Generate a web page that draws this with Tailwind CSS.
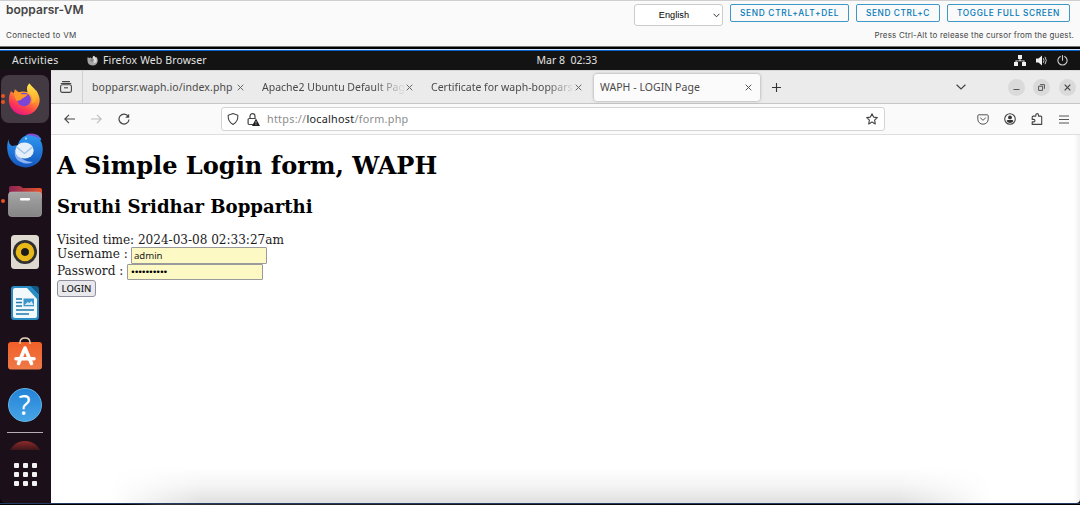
<!DOCTYPE html>
<html lang="en">
<head>
<meta charset="utf-8">
<title>bopparsr-VM</title>
<script src="https://cdn.jsdelivr.net/npm/@tailwindcss/browser@4"></script>
</head>
<body class="w-[1080px] h-[506px] overflow-hidden bg-white font-['Noto_Sans',sans-serif]">
<div class="relative flex flex-col w-[1080px] h-[505px] bg-black overflow-hidden">

  <!-- Console header -->
  <header class="flex justify-between h-[47px] shrink-0 bg-[#fafafa] border-t border-t-[#cfcfcf] border-b border-b-[#777] font-['Inter',sans-serif] text-[#454545]">
    <div class="flex flex-col pl-[6px]">
      <h1 class="text-[12px] leading-[17px] font-semibold tracking-[0.02px]">bopparsr-VM</h1>
      <p class="mt-[11px] text-[8px] leading-[13px] tracking-[0.3px]">Connected to VM</p>
    </div>
    <div class="flex flex-col items-end pr-[6px]">
      <div class="flex items-start pt-[3px] pr-[4px] font-medium text-[#0079b8]">
        <div class="flex items-center justify-end w-[89px] h-[22px] border border-[#ccc] rounded-[3px] bg-white text-black text-[9.2px] font-normal font-['Liberation_Sans',sans-serif] pr-[2px] mr-[7px]">
          <span class="mr-[24px] pt-px">English</span>
          <svg class="w-[7px] h-[5px]" viewBox="0 0 7 5" fill="none" stroke="#333" stroke-width="1"><path d="M.6.8 3.5 3.8 6.4.8"/></svg>
        </div>
        <button class="w-[119px] h-[18px] border border-[#3f97c8] rounded-[2px] text-[8.3px] leading-[17px] tracking-[0.72px] mr-[7px]">SEND CTRL+ALT+DEL</button>
        <button class="w-[84px] h-[18px] border border-[#3f97c8] rounded-[2px] text-[8.3px] leading-[17px] tracking-[0.6px] mr-[7px]">SEND CTRL+C</button>
        <button class="w-[123px] h-[18px] border border-[#3f97c8] rounded-[2px] text-[8.3px] leading-[17px] tracking-[0.63px]">TOGGLE FULL SCREEN</button>
      </div>
      <p class="mt-[3px] text-[8px] leading-[13px] tracking-[0.17px]">Press Ctrl-Alt to release the cursor from the guest.</p>
    </div>
  </header>
  <div class="h-[2px] shrink-0 bg-black"></div>
  <div class="h-[2px] shrink-0 bg-[#0b62cf] border-t border-[#cfe4f5]"></div>

  <!-- GNOME panel -->
  <div class="grid grid-cols-3 items-center h-[19px] shrink-0 bg-[#131313] text-[#e2e2e2] text-[10.5px] leading-[19px] px-[12px]">
    <div class="flex items-center">
      <span class="w-[75px] tracking-[0.28px]">Activities</span>
      <svg class="w-[11px] h-[11px] mr-[5px]" viewBox="0 0 16 16"><path d="M1 3l2 1.500 2.500-1 1 1.500L10 4 9.500 1 12 3l1 1 .5-1.500C15.500 5 16 7 15.500 9.500A7.500 7.500 0 0 1 .7 8.500C.5 6.500.5 5 1 3z" fill="#a5a5a5"/><path d="M8 3l2-2 4 4v5l-4 2z" fill="#dcdcdc"/><path d="M5 6l4-1 1 3-2 2-3-1z" fill="#858585"/></svg>
      <span class="tracking-[0.11px]">Firefox Web Browser</span>
    </div>
    <div class="text-center whitespace-pre pl-[54px]">Mar 8  02:33</div>
    <div class="flex items-center justify-end gap-[9px]">
      <svg class="w-[12px] h-[11px] -ml-px mr-px" viewBox="0 0 12 11" fill="#eee"><path d="M4 0h4v4H4zM0 7h4v4H0zM8 7h4v4H8zM5.500 4h1v1.500h4V7h-1V6.300h-7V7h-1V5.500h4z"/></svg>
      <svg class="w-[12px] h-[11px]" viewBox="0 0 12 11"><path d="M0 3.500h2.500L6 .5v10L2.500 7.500H0z" fill="#eee"/><path d="M7.300 3.200q1.500 2.300 0 4.600M9 1.800q2.600 3.700 0 7.400" fill="none" stroke="#ccc" stroke-width="1"/></svg>
      <svg class="w-[11px] h-[11px]" viewBox="0 0 11 11" fill="none" stroke="#ccc" stroke-width="1.100" stroke-linecap="round"><path d="M3.300 1.400a4.600 4.600 0 1 0 4.400 0M5.500.6v4.600"/></svg>
    </div>
  </div>

  <div class="flex h-[433px] shrink-0">
    <!-- Dock -->
    <nav class="relative flex flex-col items-center w-[51px] shrink-0 bg-[#1b1019] pt-[5px] pr-[2px] rounded-bl-[5px]">
      <div class="flex items-center justify-center w-[48px] h-[48px] shrink-0 rounded-[8px] bg-[#443a43]">
        <svg class="w-[33px] h-[34px]" viewBox="0 0 34 34">
          <defs>
            <linearGradient id="fx" x1=".8" y1="0" x2=".3" y2="1"><stop offset="0" stop-color="#ffe94a"/><stop offset=".4" stop-color="#ff9a2b"/><stop offset=".75" stop-color="#ff3b50"/><stop offset="1" stop-color="#e3168a"/></linearGradient>
            <linearGradient id="fy" x1="0" y1="0" x2="0" y2="1"><stop offset="0" stop-color="#ffe64a"/><stop offset="1" stop-color="#ffa02a"/></linearGradient>
          </defs>
          <path d="M3 9l3 2 1-4 4 3c3-1 6-1 9 0C19 6 20 3 22 1c2 3 4 4 5 8l2-1c3 5 4 8 3.500 12C31 28 25 33.500 17 33.500 8 33.500 1.500 27 1 19 .8 15 1.500 12 3 9z" fill="url(#fx)"/>
          <path d="M22 1c-3 3-3 6-1 9 4 3 5 7 3 12 5-1 7-6 5-13-1-3-5-5-7-8z" fill="url(#fy)"/>
          <circle cx="16.500" cy="17.500" r="7" fill="#7b45d8"/>
          <path d="M6 10c4-1 6 0 8 2l6 0c-1 3-4 3-6 5-1 2-3 1-5 2-2-3-3-6-3-9z" fill="#ff9826"/>
        </svg>
      </div>
      <span class="absolute left-[1px] top-[24px] w-[4px] h-[4px] rounded-full bg-[#e95420]"></span>
      <span class="absolute left-[1px] top-[30px] w-[4px] h-[4px] rounded-full bg-[#e95420]"></span>
      <span class="absolute left-[1px] top-[129px] w-[4px] h-[4px] rounded-full bg-[#e95420]"></span>

      <svg class="mt-[10px] w-[38px] h-[35px] shrink-0" viewBox="0 0 38 35">
        <defs><linearGradient id="tb" x1="0" y1="0" x2="0" y2="1"><stop offset="0" stop-color="#2f9bf3"/><stop offset="1" stop-color="#1355bd"/></linearGradient></defs>
        <path d="M3 5c-1 3 0 6 3 8l6-1c1-6 7-11 14-11 6 0 8 3 9.500 5.500-1 0-1.500 1-.5 2 3 6 2 15-2 20C28 34 20 36 13 33 4 30-2 18 3 5z" fill="url(#tb)"/>
        <path d="M20 2c5-3 11-1 14.500 4-5-3-10-4-14.500-4z" fill="#8a4ad0"/>
        <path d="M9 17c-1 6 1 10 6 12 4 2 8 2 12 0-8 0-14-4-18-12z" fill="#8fb4f3"/>
        <ellipse cx="18.500" cy="17.500" rx="9.200" ry="8" fill="#e4effa"/>
        <path d="M10.500 14l8 6.500 8-6.500" fill="none" stroke="#9fc0e4" stroke-width="1.200"/>
        <circle cx="20" cy="5.500" r="1" fill="#cfe6ff"/>
      </svg>

      <svg class="mt-[17px] w-[34px] h-[32px] shrink-0" viewBox="0 0 34 32">
        <defs><linearGradient id="fo" x1="0" x2="1"><stop offset="0" stop-color="#8a2456"/><stop offset="1" stop-color="#e85428"/></linearGradient><linearGradient id="fg" x1="0" y1="0" x2="0" y2="1"><stop offset="0" stop-color="#a5a5a5"/><stop offset="1" stop-color="#858585"/></linearGradient></defs>
        <path d="M1 3q0-2 2-2h9l3 2h17q2 0 2 2v8H1z" fill="url(#fo)"/>
        <rect x=".5" y="7" width="33" height="24.500" rx="3" fill="url(#fg)" stroke="#b5b5b5" stroke-width=".6"/>
        <rect x="12" y="13" width="10" height="2.500" rx="1" fill="#fff"/>
      </svg>

      <svg class="mt-[18px] w-[28px] h-[34px] shrink-0" viewBox="0 0 28 34">
        <rect width="28" height="34" rx="3.500" fill="#dedad0"/>
        <circle cx="14" cy="17" r="12" fill="#303030"/><circle cx="14" cy="17" r="6.500" fill="none" stroke="#e9b91a" stroke-width="5.500"/><circle cx="14" cy="17" r="3.800" fill="#1c1c1c"/>
      </svg>

      <svg class="mt-[17px] w-[28px] h-[34px] shrink-0" viewBox="0 0 28 34">
        <path d="M3 0h17l8 8v23q0 3-3 3H3q-3 0-3-3V3q0-3 3-3z" fill="#2a8cc4"/>
        <path d="M4 2h12l10 11v17q0 2-2 2H4q-2 0-2-2V4q0-2 2-2z" fill="#f3f8fb"/>
        <path d="M20 0h5q3 0 3 3v5z" fill="#0e5b8a"/>
        <path d="M5 13h6M5 16.500h6M5 20h6M5 24h18M5 28h13" stroke="#1e7ab0" stroke-width="1.600"/>
        <rect x="12.500" y="12.500" width="10.500" height="7.800" fill="#3b96cb"/><path d="M13.500 19l3-3 2 1 2-2 2 4z" fill="#d7ebf6"/>
      </svg>

      <svg class="mt-[16px] w-[34px] h-[34px] shrink-0" viewBox="0 0 34 34">
        <defs><linearGradient id="sw" x1="0" y1="0" x2="0" y2="1"><stop offset="0" stop-color="#f25f28"/><stop offset="1" stop-color="#ee7a48"/></linearGradient></defs>
        <rect y="6" width="34" height="27.500" rx="3" fill="url(#sw)"/>
        <path d="M12 8V6.500q0-4.500 5-4.500t5 4.500V8" fill="none" stroke="#e4d3bb" stroke-width="1.400"/>
        <path d="M10.500 27.500L17 12l6.500 15.500" fill="none" stroke="#fff" stroke-width="3.600" stroke-linejoin="round" stroke-linecap="round"/><path d="M8 22.800h18" stroke="#fff" stroke-width="3.600" stroke-linecap="round"/>
      </svg>

      <div class="mt-[18px] flex items-center justify-center w-[34px] h-[34px] shrink-0 rounded-full bg-linear-to-b from-[#2383d7] to-[#46a5e6] border border-[#67b4e8] text-white text-[27px] leading-[32px]">?</div>
      <div class="mt-[10px] w-[36px] h-[1px] shrink-0 bg-[#b5afb4]"></div>
      <div class="mt-[8px] w-[30px] h-[9px] shrink-0 overflow-hidden"><div class="w-[34px] h-[34px] -ml-[2px] rounded-full bg-linear-to-b from-[#8f2a2a] to-[#3a1519] to-28%"></div></div>
      <div class="mt-[13px] ml-px grid grid-cols-3 gap-[4px] shrink-0">
        <i class="w-[5px] h-[5px] rounded-[1px] bg-[#f2f2f2]"></i><i class="w-[5px] h-[5px] rounded-[1px] bg-[#f2f2f2]"></i><i class="w-[5px] h-[5px] rounded-[1px] bg-[#f2f2f2]"></i>
        <i class="w-[5px] h-[5px] rounded-[1px] bg-[#f2f2f2]"></i><i class="w-[5px] h-[5px] rounded-[1px] bg-[#f2f2f2]"></i><i class="w-[5px] h-[5px] rounded-[1px] bg-[#f2f2f2]"></i>
        <i class="w-[5px] h-[5px] rounded-[1px] bg-[#f2f2f2]"></i><i class="w-[5px] h-[5px] rounded-[1px] bg-[#f2f2f2]"></i><i class="w-[5px] h-[5px] rounded-[1px] bg-[#f2f2f2]"></i>
      </div>
    </nav>

    <!-- Browser window -->
    <div class="flex flex-col flex-1 min-w-0 bg-white rounded-br-[4px]">
      <div class="flex items-center h-[34px] shrink-0 bg-[#ebebeb] border-t border-t-[#d8d8d8] border-b border-b-[#c6c6c6] text-[10.5px] text-[#4a4a4a]">
        <div class="flex items-center justify-center w-[32px] h-full border-r border-[#cfcfcf] pr-[2px]">
          <svg class="w-[12px] h-[12px]" viewBox="0 0 12 12" fill="none" stroke="#444" stroke-width="1.100"><path d="M2.500.6h7M1.200 2.500h9.600" stroke-linecap="round"/><rect x=".6" y="3.800" width="10.800" height="7.600" rx="1.600"/><path d="M4 6.800h4"/></svg>
        </div>
        <div class="flex items-center w-[169px] pl-[9px]"><span class="w-[145px] pt-px whitespace-nowrap tracking-[0.08px]">bopparsr.waph.io/index.php</span>
          <svg class="w-[7px] h-[7px]" viewBox="0 0 7 7" stroke="#666" stroke-width="1"><path d="M.7.700l5.600 5.600M6.300.700L.7 6.300"/></svg></div>
        <div class="flex items-center w-[170px] pl-[10px]"><span class="w-[144px] pt-px whitespace-nowrap mask-r-from-78% mask-r-to-100%">Apache2 Ubuntu Default Pag</span>
          <svg class="w-[7px] h-[7px]" viewBox="0 0 7 7" stroke="#666" stroke-width="1"><path d="M.7.700l5.600 5.600M6.300.700L.7 6.300"/></svg></div>
        <div class="flex items-center w-[171px] pl-[9px]"><span class="w-[144px] pt-px whitespace-nowrap mask-r-from-80% mask-r-to-100%">Certificate for waph-boppars</span>
          <svg class="w-[7px] h-[7px]" viewBox="0 0 7 7" stroke="#666" stroke-width="1"><path d="M.7.700l5.600 5.600M6.300.700L.7 6.300"/></svg></div>
        <div class="flex items-center w-[166px] h-[27px] ml-px pl-[6px] rounded-[3px] bg-[#fbfbfb] shadow-[0_0_3px_rgba(0,0,0,.35)]"><span class="w-[145px] pt-px whitespace-nowrap tracking-[0.05px]">WAPH - LOGIN Page</span>
          <svg class="w-[7px] h-[7px]" viewBox="0 0 7 7" stroke="#555" stroke-width="1"><path d="M.7.700l5.600 5.600M6.300.700L.7 6.300"/></svg></div>
        <svg class="ml-[12px] w-[9px] h-[9px]" viewBox="0 0 9 9" stroke="#333" stroke-width="1.100"><path d="M4.500 0v9M0 4.500h9"/></svg>
        <div class="ml-auto flex items-center pr-[4px]">
          <svg class="w-[10px] h-[6px] mr-[42px]" viewBox="0 0 10 6" fill="none" stroke="#444" stroke-width="1.200"><path d="M.6.700 5 5 9.400.700"/></svg>
          <span class="flex items-center justify-center w-[17px] h-[17px] mr-[8px] rounded-full bg-[#dadada]"><svg class="w-[7px] h-[7px]" viewBox="0 0 7 7" stroke="#555"><path d="M.5 5.500h6"/></svg></span>
          <span class="flex items-center justify-center w-[17px] h-[17px] mr-[9px] rounded-full bg-[#dadada]"><svg class="w-[7px] h-[7px]" viewBox="0 0 7 7" fill="none" stroke="#555"><path d="M.6 2.200h4v4.200h-4zM2.200.600h4.200v4.200"/></svg></span>
          <span class="flex items-center justify-center w-[17px] h-[17px] rounded-full bg-[#dadada]"><svg class="w-[7px] h-[7px]" viewBox="0 0 7 7" stroke="#444" stroke-width="1.200"><path d="M.7.700l5.600 5.600M6.300.700L.7 6.300"/></svg></span>
        </div>
      </div>
      <div class="flex items-center h-[31px] shrink-0 bg-[#fafafa] border-b border-[#dedede]">
        <svg class="ml-[13px] w-[11px] h-[10px]" viewBox="0 0 11 10" fill="none" stroke="#444" stroke-width="1.100"><path d="M11 5H1M5 .8.800 5 5 9.200"/></svg>
        <svg class="ml-[16px] w-[11px] h-[10px]" viewBox="0 0 11 10" fill="none" stroke="#bdbdbd" stroke-width="1.100"><path d="M0 5h10M6 .8 10.200 5 6 9.200"/></svg>
        <svg class="ml-[16px] w-[12px] h-[12px]" viewBox="0 0 12 12" fill="none" stroke="#444" stroke-width="1.200"><path d="M10.200 3.300A5 5 0 1 0 11 6.500"/><path d="M11.200.700v4h-4z" fill="#444" stroke="none"/></svg>
        <div class="ml-[91px] flex items-center w-[664px] h-[24px] border border-[#d3d3d3] rounded-[3px] bg-white pl-[5px] pr-[6px]">
          <svg class="w-[12px] h-[12px]" viewBox="0 0 12 12" fill="none" stroke="#444" stroke-width="1.100"><path d="M6 .6 10.800 2.300c.3 4-1.300 7.300-4.800 9.200C2.500 9.600.9 6.300 1.200 2.300z" stroke-linejoin="round"/></svg>
          <svg class="ml-[8px] w-[13px] h-[13px]" viewBox="0 0 13 13"><path d="M3 5.500V3.200a2.500 2.500 0 0 1 5 0v2.300M6 11.500H2.300Q1.100 11.500 1.100 10.300V6.700q0-1.200 1.200-1.200h6.400" fill="none" stroke="#444" stroke-width="1.200"/><path d="M9 5.500l4 7.500H5z" fill="#222"/><path d="M9 8v2.500M9 11.200v.9" stroke="#fff" stroke-width=".6"/></svg>
          <span class="ml-[7px] pt-px flex-1 text-[10.8px] text-[#8c8c8c] tracking-[0.27px]">https://<span class="text-[#1c1c1c]">localhost</span>/form.php</span>
          <svg class="w-[12px] h-[12px]" viewBox="0 0 12 12" fill="none" stroke="#444" stroke-width="1.100" stroke-linejoin="round"><path d="M6 .8l1.600 3.300 3.700.5-2.700 2.600.7 3.700L6 9.100l-3.300 1.800.7-3.700L.7 4.600l3.700-.5z"/></svg>
        </div>
        <div class="ml-auto flex items-center gap-[15px] pr-[11px]">
          <svg class="w-[12px] h-[11px] -ml-px mr-px" viewBox="0 0 12 11" fill="none" stroke="#555" stroke-width="1"><path d="M1.800.8h8.400q1 0 1 1v3.400a5.200 5 0 0 1-10.400 0V1.800q0-1 1-1z"/><path d="M3.500 4 6 6.300 8.500 4" stroke-linecap="round"/></svg>
          <svg class="w-[12px] h-[12px] -ml-px mr-px" viewBox="0 0 12 12"><circle cx="6" cy="6" r="5.300" fill="none" stroke="#444" stroke-width="1.100"/><circle cx="6" cy="4.400" r="1.900" fill="#333"/><path d="M2.700 8.300q0-1.300 1.300-1.300h4q1.300 0 1.300 1.300Q8 10 6 10T2.700 8.300z" fill="#333"/></svg>
          <svg class="w-[12px] h-[12px] -ml-px mr-px" viewBox="0 0 12 12" fill="none" stroke="#444" stroke-width="1.100"><path d="M1.200 4.100q0-1 1-1h2.600V2a1.300 1.300 0 0 1 2.700 0v1.100h2.300q.9 0 .9 1v7.300H1.200V8.900h1.500a1.200 1.200 0 0 0 0-2.500H1.200z" stroke-linejoin="round"/></svg>
          <svg class="w-[10px] h-[9px]" viewBox="0 0 10 9" stroke="#555" stroke-width="1"><path d="M0 1h10M0 4.500h10M0 8h10"/></svg>
        </div>
      </div>

      <!-- Page -->
      <main class="relative flex-1 pl-[6px] font-['DejaVu_Serif',serif] text-[12.1px] leading-[15px] text-[#1c1c1c]">
        <h1 class="pt-[16px] text-[24.1px] leading-[30px] font-bold text-black">A Simple Login form, WAPH</h1>
        <h2 class="mt-[15px] text-[18.1px] leading-[22px] font-bold text-black">Sruthi Sridhar Bopparthi</h2>
        <p class="mt-[15px] tracking-[-0.03px]">Visited time: 2024-03-08 02:33:27am</p>
        <div class="flex items-start h-[16px] -mt-px"><span>Username :</span><span class="ml-[3px] w-[136px] h-[17px] pl-[2px] border border-[#9a9a9a] rounded-[1px] bg-[#fdf9c4] text-[9.6px] leading-[16px] font-['Noto_Sans',sans-serif]">admin</span></div>
        <div class="flex items-start h-[17px]"><span class="pt-px">Password :</span><span class="ml-[4px] mt-px w-[136px] h-[16px] pl-[2px] border border-[#9a9a9a] rounded-[1px] bg-[#fdf9c4] text-[9px] leading-[14px] font-['DejaVu_Sans',sans-serif] text-black tracking-[-1.7px]">••••••••••</span></div>
        <button class="block w-[39px] h-[17px] border border-[#8f8f9d] rounded-[3px] bg-[#e9e9ed] text-[9.500px] leading-[16px] font-medium font-['Noto_Sans',sans-serif] text-[#222]">LOGIN</button>
        <div class="absolute left-[40px] right-[70px] bottom-0 h-[36px] bg-linear-to-t from-black/12 via-black/4 via-50% to-transparent mask-x-from-88% mask-x-to-98%"></div>
        <div class="absolute right-0 top-0 bottom-0 w-[6px] bg-linear-to-r from-transparent to-black/6"></div>
      </main>
    </div>
  </div>
  <div class="h-px shrink-0 bg-[#263b63]"></div>
  <div class="h-px shrink-0 bg-linear-to-r from-black from-10% via-[#333] via-15% to-black to-90%"></div>
</div>
</body>
</html>
